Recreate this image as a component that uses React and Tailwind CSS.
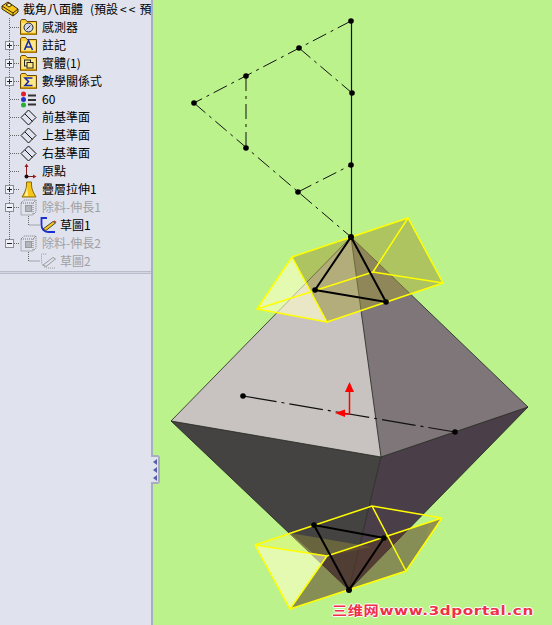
import React from 'react';

const Gutter = ({ box, last, child }) => (
  <svg width="60" height="18" className="absolute left-0 top-0" fill="none">
    <path d={last ? 'M9.5 0V9' : 'M9.5 0V18'} stroke="#666" strokeDasharray="1 1" />
    <path d={child ? 'M28.5 0V9H40' : 'M10 9.5H20'} stroke="#666" strokeDasharray="1 1" />
    {box && (
      <g>
        <rect x="5.5" y="5.5" width="8" height="8" fill="#eef0f6" stroke="#8a8d96" />
        <path d="M7 9.5h5" stroke="#223" />
        {box === 'plus' && <path d="M9.5 7v5" stroke="#223" />}
      </g>
    )}
  </svg>
);

const Folder = ({ children }) => (
  <svg width="17" height="16" viewBox="0 0 17 16">
    <path d="M.5 4V2l1-1.500h4l1.500 2h9.500v13H.5z" fill="#ffd23c" stroke="#6b4c00" />
    <rect x="2" y="4" width="13" height="9.500" fill="#ffe88a" />
    <path d="M1 15h15" stroke="#c08a00" strokeWidth="1.500" />
    {children}
  </svg>
);

const SensorIcon = () => (
  <Folder>
    <circle cx="8.5" cy="8.5" r="4.5" fill="#cfd6e6" stroke="#223" />
    <path d="M6.500 10.500l4-4" stroke="#223" />
  </Folder>
);
const NoteIcon = () => (
  <Folder>
    <path d="M4.500 13L8.500 3.500l4 9.500M6 10h5" stroke="#1a2aa8" strokeWidth="1.600" fill="none" />
  </Folder>
);
const BodyIcon = () => (
  <Folder>
    <rect x="4.500" y="5" width="6" height="6" fill="none" stroke="#222" />
    <rect x="7" y="7.500" width="6" height="5.500" fill="#ffe88a" stroke="#222" />
  </Folder>
);
const SumIcon = () => (
  <Folder>
    <path d="M12.500 5H5l3.500 3.500L5 12.500h7.500" stroke="#1a2aa8" strokeWidth="1.600" fill="none" />
  </Folder>
);
const EquationIcon = () => (
  <svg width="17" height="17" viewBox="0 0 17 17">
    <circle cx="3.500" cy="3" r="2.500" fill="#e0202a" />
    <circle cx="3.500" cy="8.500" r="2.500" fill="#2a35c8" />
    <circle cx="3.500" cy="14" r="2.500" fill="#28b030" />
    <path d="M8 4.500h8M8 9h8M8 13.500h8" stroke="#333" strokeWidth="2" />
  </svg>
);
const PlaneIcon = () => (
  <svg width="17" height="17" viewBox="0 0 17 17" fill="none" stroke="#111">
    <path d="M8.500 1L16 8.500 8.500 16 1 8.500z" />
    <path d="M5 5l7.500 7.500" />
  </svg>
);
const OriginIcon = () => (
  <svg width="17" height="17" viewBox="0 0 17 17" fill="none">
    <path d="M6.500 14V2M6.500 13.500H15" stroke="#8c1a1a" />
    <path d="M4.500 4l2-3.500 2 3.500zM13 11.500l3.500 2-3.500 2z" fill="#a01818" />
    <circle cx="6.500" cy="13.500" r="2" fill="#111" />
  </svg>
);
const LoftIcon = () => (
  <svg width="16" height="17" viewBox="0 0 16 17">
    <path d="M5.500 1h5v3c0 4 2 8 4.500 12H1C3.500 12 5.500 8 5.500 4z" fill="#f5c518" stroke="#8a6a08" />
    <path d="M6 5C6 9 4.500 12 3.500 15H7z" fill="#fff2a8" />
  </svg>
);
const CutIcon = () => (
  <svg width="17" height="17" viewBox="0 0 17 17" fill="none" stroke="#777" strokeDasharray="1 1">
    <path d="M1 4l3-3h12v12l-3 3H1z" />
    <path d="M1 4h12v12M13 4l3-3" />
    <rect x="5.500" y="6.500" width="6" height="6" fill="#b4b6be" strokeDasharray="none" stroke="#999" />
  </svg>
);
const SketchIcon = () => (
  <svg width="17" height="16" viewBox="0 0 17 16" fill="none">
    <path d="M15 15H8C4 15 1.500 12 1.500 8V1H7" stroke="#1f2ed0" strokeWidth="1.800" />
    <path d="M3 12L13 4.500l2.500 1.500L6 13.500z" fill="#f4c81c" stroke="#222" strokeWidth=".8" />
    <path d="M13 4.500l1.500-1 2 1.500-1 1z" fill="#c04030" />
  </svg>
);
const SketchGreyIcon = () => (
  <svg width="17" height="16" viewBox="0 0 17 16" fill="none" stroke="#9a9a9a">
    <path d="M15 15H8C4 15 1.500 12 1.500 8V1H7" strokeDasharray="1 1" />
    <path d="M3 12L13 4.500l2.500 1.500L6 13.500z" />
  </svg>
);

const rows = [
  { label: '感測器', Icon: SensorIcon },
  { label: '註記', Icon: NoteIcon, box: 'plus' },
  { label: '實體(1)', Icon: BodyIcon, box: 'plus' },
  { label: '數學關係式', Icon: SumIcon, box: 'plus' },
  { label: '60', Icon: EquationIcon },
  { label: '前基準面', Icon: PlaneIcon },
  { label: '上基準面', Icon: PlaneIcon },
  { label: '右基準面', Icon: PlaneIcon },
  { label: '原點', Icon: OriginIcon },
  { label: '疊層拉伸1', Icon: LoftIcon, box: 'plus' },
  { label: '除料-伸長1', Icon: CutIcon, box: 'minus', grey: true },
  { label: '草圖1', Icon: SketchIcon, child: true },
  { label: '除料-伸長2', Icon: CutIcon, box: 'minus', grey: true, last: true },
  { label: '草圖2', Icon: SketchGreyIcon, child: true, grey: true, noTrunk: true },
];

const TreeRow = ({ label, Icon, box, grey, child, last, noTrunk }) => (
  <div className="relative flex h-[18px] items-center">
    {!noTrunk ? <Gutter box={box} child={child} last={last} /> : (
      <svg width="60" height="18" className="absolute left-0 top-0" fill="none">
        <path d="M28.5 0V9H40" stroke="#666" strokeDasharray="1 1" />
      </svg>
    )}
    <div className={`relative flex items-center ${child ? 'ml-[40px] gap-[3px]' : 'ml-[20px] gap-[5px]'}`}>
      <span className="flex w-[17px] justify-center"><Icon /></span>
      <span className={`whitespace-nowrap text-[12px] leading-[18px] ${grey ? 'text-[#a0a0a4]' : 'text-black'}`}>{label}</span>
    </div>
  </div>
);

const Tree = () => (
  <div className="w-full overflow-hidden font-['Noto_Sans_CJK_TC','Liberation_Sans',sans-serif]">
    <div className="flex h-[18px] items-center gap-[4px] pl-[1px]">
      <svg width="18" height="16" viewBox="0 0 18 16" className="shrink-0">
        <path d="M1 5l6-4 10 7v3l-5 4-11-7z" fill="#f4c81c" stroke="#3a2a00" />
        <path d="M1 5l11 7v3M12 12l5-4" fill="none" stroke="#3a2a00" />
        <path d="M5 4l3-2 3 2-3 2z" fill="#fff0a0" stroke="#3a2a00" />
      </svg>
      <span className="whitespace-nowrap text-[12px] leading-[18px] text-black">
        截角八面體<span className="ml-[7px]">(預設</span><span className="mx-[2px] tracking-[2px]">&lt;&lt;</span>預設
      </span>
    </div>
    {rows.map((r) => <TreeRow key={r.label} {...r} />)}
  </div>
);

const Model = () => (
  <svg width="399" height="625" viewBox="153 0 399 625" className="block">
    {/* sketch lines */}
    <g fill="none" stroke="#111" strokeWidth="1" strokeDasharray="15 5 3 5">
      <path d="M351 21L194 103" />
      <path d="M194 103L351 237" />
      <path d="M246 76V148" />
      <path d="M298 192L351 165" />
      <path d="M299 48L352 93" />
    </g>
    <path d="M351.500 21V237" stroke="#111" strokeWidth="1.200" fill="none" />
    <g fill="#000">
      {[[351, 21], [299, 48], [246, 76], [194, 103], [246, 148], [298, 192], [352, 93], [351, 165]].map(([x, y]) => (
        <circle key={`${x}-${y}`} cx={x} cy={y} r="2.800" />
      ))}
    </g>

    {/* body faces */}
    <polygon points="351,237 171,421 381,457" fill="#c8c3c0" />
    <polygon points="351,237 381,457 528,407" fill="#7f767a" />
    <polygon points="171,421 381,457 349,590" fill="#454342" />
    <polygon points="381,457 528,407 349,590" fill="#4a3f48" />
    <path d="M351 237L171 421L349 590L528 407Z M171 421L381 457L528 407 M351 237L381 457L349 590" fill="none" stroke="#222" strokeWidth=".8" />

    {/* axis */}
    <path d="M243 396L455 432" stroke="#111" strokeWidth="1.200" strokeDasharray="34 5 3 5" />
    <circle cx="243" cy="396" r="2.800" />
    <circle cx="455" cy="432" r="2.800" />
    <path d="M349.500 414V388" stroke="#f00" strokeWidth="1.500" />
    <polygon points="349.500,382 345,392 354,392" fill="#f00" />
    <path d="M350 414H342" stroke="#f00" strokeWidth="1.500" />
    <polygon points="335,413 345,409.500 345,417" fill="#f00" />

    {/* top prism */}
    <polygon points="292,257 408,218 443,283 327,322" fill="rgb(158,152,57)" fillOpacity=".51" />
    <polygon points="292,257 257,309 327,322" fill="rgb(255,255,200)" fillOpacity=".6" />
    <path d="M292 257L408 218L443 283L327 322ZM292 257L257 309L327 322M257 309L373 272L443 283M373 272L408 218" fill="none" stroke="#ffff00" strokeWidth="1.500" />
    <path d="M351 237L315 290L386 302Z" fill="none" stroke="#000" strokeWidth="2" />
    <circle cx="351" cy="237" r="3" />
    <circle cx="315" cy="290" r="2.800" />
    <circle cx="386" cy="302" r="2.800" />

    {/* bottom prism */}
    <polygon points="290,533 372,547 327,556 313,553" fill="rgb(158,152,57)" fillOpacity=".4" />
    <polygon points="255,545 290,533 313,553 327,556" fill="rgb(255,255,120)" fillOpacity=".35" />
    <polygon points="429,522 442,518 425,545" fill="rgb(255,255,120)" fillOpacity=".35" />
    <polygon points="290,609 406,571 442,518 327,556" fill="rgb(90,58,38)" fillOpacity=".54" />
    <polygon points="255,545 290,609 327,556" fill="rgb(255,255,200)" fillOpacity=".6" />
    <path d="M255 545L372 506L442 518L327 556ZM255 545L290 609L327 556M290 609L406 571L442 518M406 571L372 506" fill="none" stroke="#ffff00" strokeWidth="1.500" />
    <path d="M349 590L314 525L384 538Z" fill="none" stroke="#000" strokeWidth="2" />
    <circle cx="314" cy="525" r="2.800" />
    <circle cx="384" cy="538" r="2.800" />
    <circle cx="349" cy="590" r="3" />
  </svg>
);

export default function App() {
  return (
    <div className="flex h-[625px] w-[552px] overflow-hidden bg-[#bcf28c]">
      <aside className="relative flex w-[153px] shrink-0 flex-col border-r-2 border-[#a9adc2] bg-[#e0e3ee]">
        <Tree />
        <div className="mt-[1px] h-[3px] w-full border-y border-[#b9bccb] bg-[#d4d7e3]" />
        {/* collapse handle */}
        <div className="absolute left-[151px] top-[455px] flex h-[29px] w-[9px] flex-col items-center justify-center gap-[2px] rounded-r-[3px] border-y-2 border-r-2 border-[#a9adc2] bg-[#e0e3ee]">
          <span className="h-0 w-0 border-y-[3px] border-r-[4px] border-y-transparent border-r-[#5a5fa8]" />
          <span className="h-0 w-0 border-y-[3px] border-r-[4px] border-y-transparent border-r-[#5a5fa8]" />
          <span className="h-0 w-0 border-y-[3px] border-r-[4px] border-y-transparent border-r-[#5a5fa8]" />
        </div>
      </aside>
      <main className="relative flex-1">
        <Model />
        {/* watermark sits over the canvas */}
        <div className="absolute left-[179px] top-[602px] origin-left scale-x-[1.17] whitespace-nowrap font-['DejaVu_Sans','Noto_Sans_CJK_SC',sans-serif] text-[13px] font-bold leading-[18px] tracking-[0.5px] text-[#f0304a] [text-shadow:1px_0_#fff,-1px_0_#fff,0_1px_#fff,0_-1px_#fff]">
          三维网www.3dportal.cn
        </div>
      </main>
    </div>
  );
}
